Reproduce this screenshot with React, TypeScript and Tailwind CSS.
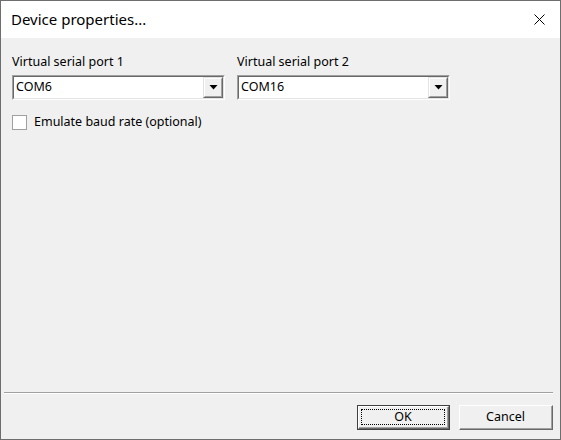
import { useState } from 'react';

const font = { fontFamily: '"Segoe UI", "Noto Sans", "Open Sans", sans-serif' };

const ComboBox = ({ value }: { value: string }) => (
    <div className="w-[213px] h-[25px] flex border-t border-l border-t-[#a0a0a0] border-l-[#a0a0a0] border-b border-r border-b-white border-r-white">
        <div className="flex-1 flex border-t border-l border-t-[#696969] border-l-[#696969] border-b border-r border-b-[#e3e3e3] border-r-[#e3e3e3] bg-white">
            <div className="flex-1 flex items-center pl-[2px] text-[12.5px] text-black">{value}</div>
            <div className="w-[20px] h-full flex border-t border-l border-t-[#e3e3e3] border-l-[#e3e3e3] border-b border-r border-b-[#696969] border-r-[#696969]">
                <div className="flex-1 flex items-center justify-center bg-[#f0f0f0] border-t border-l border-t-white border-l-white border-b border-r border-b-[#a0a0a0] border-r-[#a0a0a0]">
                    <svg width="9" height="5" viewBox="0 0 9 5">
                        <path d="M0.5 0 H8.5 L4.5 4.5 Z" fill="#000" />
                    </svg>
                </div>
            </div>
        </div>
    </div>
);

export default function App() {
    const [emulate, setEmulate] = useState(false);

    return (
        <div className="w-[561px] h-[440px] flex flex-col border border-[#6e6e6e] bg-[#f0f0f0] overflow-hidden" style={font}>
            {/* Title bar */}
            <div className="h-[37px] shrink-0 bg-white flex items-center justify-between">
                <span className="pl-[10px] text-[15px] text-black">Device properties...</span>
                <div className="w-[44px] h-full flex items-center justify-center mr-[-1px]">
                    <svg width="11" height="11" viewBox="0 0 11 11">
                        <path d="M0.5 0.5 L10.5 10.5 M10.5 0.5 L0.5 10.5" stroke="#000" strokeWidth="1" />
                    </svg>
                </div>
            </div>

            {/* Body */}
            <div className="flex-1 flex flex-col px-[11px] pt-[16px]">
                <div className="flex gap-[12px]">
                    <div className="flex flex-col gap-[5px]">
                        <label className="text-[12.5px] leading-[16px] text-black">Virtual serial port 1</label>
                        <ComboBox value="COM6" />
                    </div>
                    <div className="flex flex-col gap-[5px]">
                        <label className="text-[12.5px] leading-[16px] text-black">Virtual serial port 2</label>
                        <ComboBox value="COM16" />
                    </div>
                </div>

                <label className="mt-[13px] flex items-center gap-[7px] text-[12.5px] text-black" onClick={() => setEmulate(!emulate)}>
                    <span className="w-[15px] h-[15px] flex items-center justify-center bg-white border border-[#a0a0a0]">
                        {emulate && (
                            <svg width="9" height="8" viewBox="0 0 9 8">
                                <path d="M1 4 L3.5 6.5 L8 1" stroke="#000" strokeWidth="1.5" fill="none" />
                            </svg>
                        )}
                    </span>
                    Emulate baud rate (optional)
                </label>

                <div className="flex-1" />
            </div>

            {/* Footer */}
            <div className="h-[47px] shrink-0 flex flex-col">
                <div className="ml-[3px] mr-[7px] h-[2px] border-t border-t-[#a0a0a0] border-b border-b-white" />
                <div className="flex justify-end gap-[9px] pr-[7px] pt-[11px]">
                    <button className="w-[93px] h-[25px] flex border border-[#404040]">
                        <span className="flex-1 flex border-t border-l border-t-white border-l-white border-b border-r border-b-[#696969] border-r-[#696969]">
                            <span className="flex-1 flex p-[2px] border-b border-r border-b-[#a0a0a0] border-r-[#a0a0a0]">
                                <span className="flex-1 flex items-center justify-center border border-dotted border-black text-[12.5px] text-black">OK</span>
                            </span>
                        </span>
                    </button>
                    <button className="w-[94px] h-[25px] flex border-t border-l border-t-white border-l-white border-b border-r border-b-[#696969] border-r-[#696969]">
                        <span className="flex-1 flex items-center justify-center border-b border-r border-b-[#a0a0a0] border-r-[#a0a0a0] text-[12.5px] text-black">Cancel</span>
                    </button>
                </div>
            </div>
        </div>
    );
}
